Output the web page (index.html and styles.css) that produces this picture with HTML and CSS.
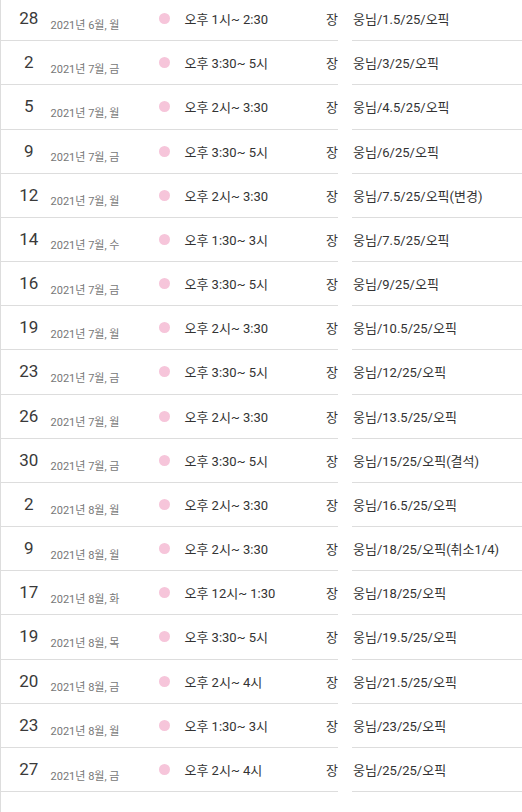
FILE: index.html
```html
<!DOCTYPE html>
<html lang="ko">
<head>
<meta charset="utf-8">
<link rel="stylesheet" href="styles.css">
</head>
<body>
<div class="list">
  <div class="row"><div class="main"><span class="day">28</span><span class="date">2021년 6월, 월</span><span class="dot"></span><span class="time">오후 1시~ 2:30</span><span class="who">장</span></div><div class="gap"></div><div class="note">웅님/1.5/25/오픽</div></div>
  <div class="row"><div class="main"><span class="day">2</span><span class="date">2021년 7월, 금</span><span class="dot"></span><span class="time">오후 3:30~ 5시</span><span class="who">장</span></div><div class="gap"></div><div class="note">웅님/3/25/오픽</div></div>
  <div class="row"><div class="main"><span class="day">5</span><span class="date">2021년 7월, 월</span><span class="dot"></span><span class="time">오후 2시~ 3:30</span><span class="who">장</span></div><div class="gap"></div><div class="note">웅님/4.5/25/오픽</div></div>
  <div class="row"><div class="main"><span class="day">9</span><span class="date">2021년 7월, 금</span><span class="dot"></span><span class="time">오후 3:30~ 5시</span><span class="who">장</span></div><div class="gap"></div><div class="note">웅님/6/25/오픽</div></div>
  <div class="row"><div class="main"><span class="day">12</span><span class="date">2021년 7월, 월</span><span class="dot"></span><span class="time">오후 2시~ 3:30</span><span class="who">장</span></div><div class="gap"></div><div class="note">웅님/7.5/25/오픽(변경)</div></div>
  <div class="row"><div class="main"><span class="day">14</span><span class="date">2021년 7월, 수</span><span class="dot"></span><span class="time">오후 1:30~ 3시</span><span class="who">장</span></div><div class="gap"></div><div class="note">웅님/7.5/25/오픽</div></div>
  <div class="row"><div class="main"><span class="day">16</span><span class="date">2021년 7월, 금</span><span class="dot"></span><span class="time">오후 3:30~ 5시</span><span class="who">장</span></div><div class="gap"></div><div class="note">웅님/9/25/오픽</div></div>
  <div class="row"><div class="main"><span class="day">19</span><span class="date">2021년 7월, 월</span><span class="dot"></span><span class="time">오후 2시~ 3:30</span><span class="who">장</span></div><div class="gap"></div><div class="note">웅님/10.5/25/오픽</div></div>
  <div class="row"><div class="main"><span class="day">23</span><span class="date">2021년 7월, 금</span><span class="dot"></span><span class="time">오후 3:30~ 5시</span><span class="who">장</span></div><div class="gap"></div><div class="note">웅님/12/25/오픽</div></div>
  <div class="row"><div class="main"><span class="day">26</span><span class="date">2021년 7월, 월</span><span class="dot"></span><span class="time">오후 2시~ 3:30</span><span class="who">장</span></div><div class="gap"></div><div class="note">웅님/13.5/25/오픽</div></div>
  <div class="row"><div class="main"><span class="day">30</span><span class="date">2021년 7월, 금</span><span class="dot"></span><span class="time">오후 3:30~ 5시</span><span class="who">장</span></div><div class="gap"></div><div class="note">웅님/15/25/오픽(결석)</div></div>
  <div class="row"><div class="main"><span class="day">2</span><span class="date">2021년 8월, 월</span><span class="dot"></span><span class="time">오후 2시~ 3:30</span><span class="who">장</span></div><div class="gap"></div><div class="note">웅님/16.5/25/오픽</div></div>
  <div class="row"><div class="main"><span class="day">9</span><span class="date">2021년 8월, 월</span><span class="dot"></span><span class="time">오후 2시~ 3:30</span><span class="who">장</span></div><div class="gap"></div><div class="note">웅님/18/25/오픽(취소1/4)</div></div>
  <div class="row"><div class="main"><span class="day">17</span><span class="date">2021년 8월, 화</span><span class="dot"></span><span class="time">오후 12시~ 1:30</span><span class="who">장</span></div><div class="gap"></div><div class="note">웅님/18/25/오픽</div></div>
  <div class="row"><div class="main"><span class="day">19</span><span class="date">2021년 8월, 목</span><span class="dot"></span><span class="time">오후 3:30~ 5시</span><span class="who">장</span></div><div class="gap"></div><div class="note">웅님/19.5/25/오픽</div></div>
  <div class="row"><div class="main"><span class="day">20</span><span class="date">2021년 8월, 금</span><span class="dot"></span><span class="time">오후 2시~ 4시</span><span class="who">장</span></div><div class="gap"></div><div class="note">웅님/21.5/25/오픽</div></div>
  <div class="row"><div class="main"><span class="day">23</span><span class="date">2021년 8월, 월</span><span class="dot"></span><span class="time">오후 1:30~ 3시</span><span class="who">장</span></div><div class="gap"></div><div class="note">웅님/23/25/오픽</div></div>
  <div class="row"><div class="main"><span class="day">27</span><span class="date">2021년 8월, 금</span><span class="dot"></span><span class="time">오후 2시~ 4시</span><span class="who">장</span></div><div class="gap"></div><div class="note">웅님/25/25/오픽</div></div>
</div>
</body>
</html>
```

FILE: styles.css
```css
html, body {
  margin: 0;
  padding: 0;
  background: #fff;
  height: 100%;
  overflow: hidden;
}
body {
  font-family: Roboto, "Noto Sans CJK KR", sans-serif;
  color: #333;
  border-left: 1px solid #ddd;
  box-sizing: border-box;
}
.list {
  margin-top: -3px;
}
.row {
  display: flex;
  height: 44.18px;
}
.main {
  width: 337px;
  display: flex;
  align-items: center;
  border-bottom: 1px solid #ddd;
  box-sizing: border-box;
}
.gap {
  width: 14px;
}
.note {
  flex: 1;
  display: flex;
  align-items: center;
  border-bottom: 1px solid #ddd;
  box-sizing: border-box;
  font-size: 13px;
  padding-left: 1px;
}
.day {
  width: 42px;
  margin-left: 7px;
  text-align: center;
  font-size: 17px;
  color: #3a3a3a;
  padding-bottom: 1px;
}
.date {
  width: 110px;
  margin-left: 1px;
  font-size: 11px;
  color: #777;
  padding-top: 10px;
}
.dot {
  width: 11px;
  height: 11px;
  border-radius: 50%;
  background: #f6c5da;
  flex: none;
}
.time {
  width: 143px;
  margin-left: 14px;
  font-size: 13px;
}
.who {
  font-size: 13px;
}
```
